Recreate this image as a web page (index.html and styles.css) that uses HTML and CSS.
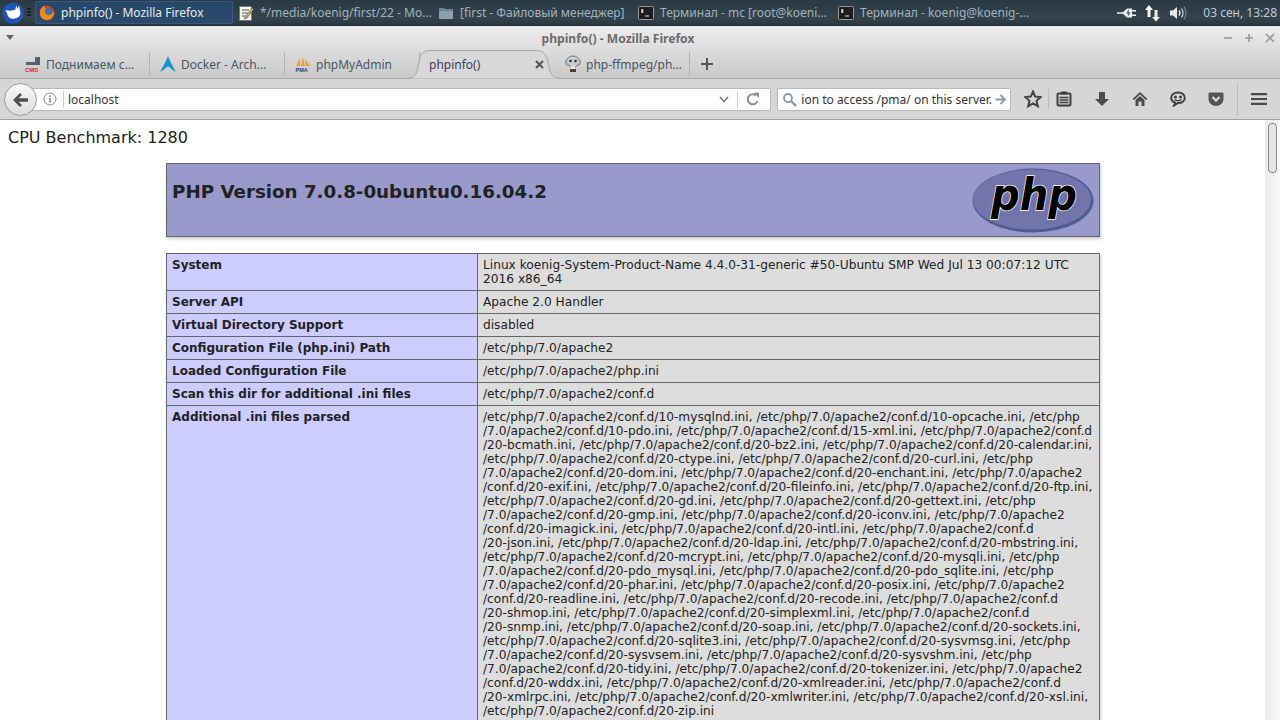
FILE: index.html
```html
<!DOCTYPE html>
<html lang="ru">
<head>
<meta charset="utf-8">
<title>phpinfo() - Mozilla Firefox</title>
<link rel="stylesheet" href="styles.css">
</head>
<body>
<header class="taskbar">
  <div class="whisker"><svg width="22" height="22" viewBox="0 0 22 22"><circle cx="11" cy="11" r="10.5" fill="#1c56b4"/><path d="M3.500 9 C5 7 7 9.500 9 8.500 L13 8 L14.500 3.500 L15.500 7 L17 3.500 L18 9 C19.500 12 17 16.500 12.500 16.500 C9 17.500 6.500 15.500 5.500 13 C5.500 11.500 4.500 10 3.500 9Z" fill="#fff"/></svg></div>
  <div class="handle"></div>
  <div class="task task-active">
    <svg width="16" height="16" viewBox="0 0 16 16"><circle cx="8" cy="8" r="7.500" fill="#c9421a"/><circle cx="9.500" cy="6.500" r="3.800" fill="#3f6fb0"/><path d="M1 8 C1 4 3 2 6 .8 C5.200 3 6 3.300 7 4 C5.500 5 5.500 7 6.500 8.500 C8.500 11.500 12.500 10.500 14.500 6.500 L15.300 8 C15 12 12 15 8 15 C4 15 1 12 1 8Z" fill="#ef8a1d"/></svg>
    <span class="task-label">phpinfo() - Mozilla Firefox</span>
  </div>
  <div class="task">
    <svg width="16" height="16" viewBox="0 0 16 16"><rect x="1.500" y="1.500" width="12" height="14" fill="#f4f4f0" stroke="#777"/><path d="M4 5H11M4 8H10M4 11H8" stroke="#555"/><path d="M7 12 L14 3 L16 4 L9 13 L6.500 14Z" fill="#c9b26c" stroke="#444" stroke-width=".6"/></svg>
    <span class="task-label">*/media/koenig/first/22 - Mo...</span>
  </div>
  <div class="task">
    <svg width="16" height="16" viewBox="0 0 16 16"><path d="M1 4 V3 H6 L7 4 H15 V14 H1Z" fill="#6c8494"/><rect x="1" y="6" width="14" height="8" fill="#8ba1af"/></svg>
    <span class="task-label">[first - Файловый менеджер]</span>
  </div>
  <div class="task">
    <svg width="16" height="16" viewBox="0 0 16 16"><rect x=".5" y="1.500" width="15" height="13" rx="1" fill="#1d1d1d" stroke="#9a9a9a"/><path d="M3 5H5.500M3 7H5.500M4.200 4V8M7 11H11" stroke="#eee"/></svg>
    <span class="task-label">Терминал - mc [root@koeni...</span>
  </div>
  <div class="task">
    <svg width="16" height="16" viewBox="0 0 16 16"><rect x=".5" y="1.500" width="15" height="13" rx="1" fill="#1d1d1d" stroke="#9a9a9a"/><path d="M3 5H5.500M3 7H5.500M4.200 4V8M7 11H11" stroke="#eee"/></svg>
    <span class="task-label">Терминал - koenig@koenig-...</span>
  </div>
  <div class="tray">
    <svg width="20" height="16" viewBox="0 0 20 16"><path d="M0 8H6" stroke="#eee" stroke-width="1.500"/><path d="M5 8 L10 3.500 H15 V5 H19 V6.500 H15 V9.500 H19 V11 H15 V12.500 H10Z" fill="#eee"/><path d="M12 4 L9.500 8.500 H11.500 L10.500 12 L13.500 7.500 H11.500Z" fill="#2e3f49"/></svg>
    <svg width="18" height="18" viewBox="0 0 18 18"><path d="M5 1 L9 6 H6.500 V13 H3.500 V6 H1Z" fill="#fff"/><path d="M10.500 6 H13.500 V13 H16 L12 17.500 L8 13 H10.500Z" fill="#eee"/></svg>
    <svg width="19" height="18" viewBox="0 0 19 18"><path d="M1 6.500 H4 L8 3 V15 L4 11.500 H1Z" fill="#e8e8e8"/><path d="M10 6.500 Q12 9 10 11.500" fill="none" stroke="#e8e8e8" stroke-width="1.300"/><path d="M12.500 4.500 Q15.500 9 12.500 13.500" fill="none" stroke="#cfd4d6" stroke-width="1.200"/><path d="M15 2.500 Q19 9 15 15.500" fill="none" stroke="#7d898f" stroke-width="1.100"/></svg>
  </div>
  <div class="clock">03 сен, 13:28</div>
</header>

<div class="window-top">
  <div class="titlebar">
    <svg class="menu-arrow" width="9" height="6" viewBox="0 0 9 6"><path d="M0 0H8L4 5Z" fill="#666"/></svg>
    <div class="window-title">phpinfo() - Mozilla Firefox</div>
    <div class="window-buttons">
      <svg width="10" height="10" viewBox="0 0 10 10"><path d="M1 5H9" stroke="#999" stroke-width="1.600"/></svg>
      <svg width="10" height="10" viewBox="0 0 10 10"><path d="M1 5H9M5 1V9" stroke="#999" stroke-width="1.600"/></svg>
      <svg width="10" height="10" viewBox="0 0 10 10"><path d="M1 1L9 9M9 1L1 9" stroke="#999" stroke-width="1.600"/></svg>
    </div>
  </div>
  <nav class="tabstrip">
    <div class="tab">
      <svg width="16" height="16" viewBox="0 0 16 16"><path d="M10 1H15V9H1V6H10Z" fill="#54616c"/><text x="0" y="15.500" class="cms-text">CMS</text></svg>
      <span class="tab-label">Поднимаем с...</span>
    </div>
    <div class="tab">
      <svg width="16" height="16" viewBox="0 0 16 16"><path d="M8 0 C9 3 12 9 16 16 C13 14 11 13 11 13 C10 10 6 10 5 13 C5 13 3 14 0 16 C4 9 7 3 8 0Z" fill="#1793d1"/></svg>
      <span class="tab-label">Docker - Arch...</span>
    </div>
    <div class="tab">
      <svg width="16" height="16" viewBox="0 0 16 16"><path d="M1 10 L5 2 L5 10Z M6 10 L8 1 L9.500 10Z M10.500 10 L10 3 L15 10Z" fill="#f29a2e"/><text x="0.500" y="15.500" class="pma-text">PMA</text></svg>
      <span class="tab-label">phpMyAdmin</span>
    </div>
    <div class="tab tab-active">
      <svg class="tab-shape" width="160" height="30" viewBox="0 0 160 30"><path d="M0 29.500 C8 29.500 10 27 12 18 C14 7 15 1.500 24 1.500 H131 C139 1.500 141 7 143 18 C145 27 147 29.500 159 29.500" fill="#d8d8d8" stroke="#a8a8a8"/></svg>
      <span class="tab-label tab-label-active">phpinfo()</span>
      <svg class="tab-close" width="9" height="9" viewBox="0 0 9 9"><path d="M1 1L8 8M8 1L1 8" stroke="#555" stroke-width="2"/></svg>
    </div>
    <div class="tab tab-after">
      <svg width="16" height="18" viewBox="0 0 16 18"><ellipse cx="8" cy="6.500" rx="6.500" ry="5.500" fill="#c9ced2" stroke="#777"/><path d="M1 5 C-1 8 1 11 4 10M15 5 C17 8 15 11 12 10" fill="#aeb4b8" stroke="#777" stroke-width=".7"/><circle cx="5.500" cy="6" r="1.300" fill="#333"/><circle cx="10.500" cy="6" r="1.300" fill="#333"/><path d="M6 11 V14 H10 V11Z" fill="#e6e6e6"/><path d="M5 14 H11 V17 H5Z" fill="#5a3a22"/></svg>
      <span class="tab-label">php-ffmpeg/ph...</span>
    </div>
    <div class="new-tab"><svg width="14" height="14" viewBox="0 0 14 14"><path d="M7 1V13M1 7H13" stroke="#555" stroke-width="2"/></svg></div>
  </nav>
  <div class="toolbar">
    <div class="back">
      <svg width="15" height="14" viewBox="0 0 15 14"><path d="M7 0 L0 7 L7 14 L9 12 L5.500 8.700 H15 V5.300 H5.500 L9 2Z" fill="#505050"/></svg>
    </div>
    <div class="urlbar">
      <svg class="info" width="14" height="14" viewBox="0 0 14 14"><circle cx="7" cy="7" r="6" fill="none" stroke="#888"/><path d="M7 3.500V5M7 6V10.500" stroke="#777" stroke-width="1.400"/></svg>
      <span class="divider"></span>
      <span class="url">localhost</span>
      <svg class="url-chevron" width="10" height="7" viewBox="0 0 10 7"><path d="M1 1 L5 5.500 L9 1" fill="none" stroke="#777" stroke-width="1.500"/></svg>
      <span class="divider"></span>
      <svg class="reload" width="14" height="14" viewBox="0 0 14 14"><path d="M11.500 9 A5 5 0 1 1 10 3.500" fill="none" stroke="#8a8f93" stroke-width="2"/><path d="M8 0.500 H13 V6Z" fill="#8a8f93"/></svg>
    </div>
    <div class="searchbar">
      <svg width="15" height="15" viewBox="0 0 15 15"><circle cx="6" cy="6" r="4" fill="none" stroke="#8c97a3" stroke-width="1.800"/><path d="M9 9 L14 14" stroke="#8c97a3" stroke-width="2.400"/></svg>
      <span class="search-text"><span>ession to access /pma/ on this server.</span></span>
      <svg width="11" height="11" viewBox="0 0 11 11"><path d="M5.500 1 L10 5.500 L5.500 10 M10 5.500 H0.500" fill="none" stroke="#8c97a3" stroke-width="1.800"/></svg>
    </div>
    <div class="tools">
      <svg class="t-star" width="18" height="18" viewBox="0 0 18 18"><path d="M9 1.500 L11.200 6.600 L16.700 7.100 L12.500 10.800 L13.800 16.200 L9 13.300 L4.200 16.200 L5.500 10.800 L1.300 7.100 L6.800 6.600Z" fill="none" stroke="#444" stroke-width="2"/></svg>
      <span class="t-sep"></span>
      <svg class="t-list" width="16" height="16" viewBox="0 0 16 16"><rect x="1.500" y="2.500" width="13" height="12" rx="1" fill="none" stroke="#3f3f3f" stroke-width="2"/><rect x="5" y="0.500" width="6" height="3" fill="#3f3f3f"/><path d="M3.500 6.500H12.500M3.500 9H12.500M3.500 11.500H12.500" stroke="#3f3f3f" stroke-width="1.400"/></svg>
      <svg class="t-down" width="16" height="16" viewBox="0 0 16 16"><path d="M5 1H11V8H15L8 15L1 8H5Z" fill="#4c4c4c"/></svg>
      <svg class="t-home" width="16" height="16" viewBox="0 0 16 16"><path d="M8 1 L15.500 8 L14 9 L8 3.500 L2 9 L0.500 8Z" fill="#4c4c4c"/><path d="M3.500 9 L8 5 L12.500 9 V15 H9.500 V10.500 H6.500 V15 H3.500Z" fill="#4c4c4c"/></svg>
      <svg class="t-chat" width="16" height="16" viewBox="0 0 16 16"><path d="M8 1.500 C12 1.500 14.800 3.800 14.800 7 C14.800 10 12 12 8 12 L4 14.500 L5 11.500 C2.700 10.700 1.200 9 1.200 7 C1.200 3.800 4 1.500 8 1.500Z" fill="none" stroke="#3f3f3f" stroke-width="2"/><circle cx="5.500" cy="6" r="1.500" fill="#3f3f3f"/><circle cx="10.500" cy="6" r="1.500" fill="#3f3f3f"/><path d="M4.500 8.500 Q8 11 11.500 8.500" fill="none" stroke="#3f3f3f" stroke-width="1.400"/></svg>
      <svg class="t-pocket" width="16" height="16" viewBox="0 0 16 16"><path d="M1.500 1.500 H14.500 Q15.500 1.500 15.500 2.500 V8 C15.500 12 12 15 8 15 C4 15 .5 12 .5 8 V2.500 Q.5 1.500 1.500 1.500Z" fill="#555"/><path d="M4.500 6 L8 9.500 L11.500 6" fill="none" stroke="#e2e2e2" stroke-width="2"/></svg>
      <span class="t-sep t-sep-wide"></span>
      <svg class="t-menu" width="16" height="14" viewBox="0 0 16 14"><path d="M0 2.200H16M0 7H16M0 11.800H16" stroke="#4a4a4a" stroke-width="2.200"/></svg>
    </div>
  </div>
</div>

<div class="viewport">
  <main class="page">
    <div class="benchmark">CPU Benchmark: 1280</div>
    <div class="center">
      <table class="info-table">
        <tr class="h"><td>
          <svg class="php-logo" width="122" height="65" viewBox="0 0 122 65"><ellipse cx="61" cy="32.500" rx="60.500" ry="32" fill="#4f5b93"/><ellipse cx="60" cy="31.500" rx="59" ry="30" fill="#7175ac"/><text x="19" y="42" textLength="86" lengthAdjust="spacingAndGlyphs" class="php-word">php</text></svg>
          <h1 class="p">PHP Version 7.0.8-0ubuntu0.16.04.2</h1>
        </td></tr>
      </table>
      <table class="info-table">
        <tr><td class="e">System</td><td class="v">Linux koenig-System-Product-Name 4.4.0-31-generic #50-Ubuntu SMP Wed Jul 13 00:07:12 UTC<br>2016 x86_64</td></tr>
        <tr><td class="e">Server API</td><td class="v">Apache 2.0 Handler</td></tr>
        <tr><td class="e">Virtual Directory Support</td><td class="v">disabled</td></tr>
        <tr><td class="e">Configuration File (php.ini) Path</td><td class="v">/etc/php/7.0/apache2</td></tr>
        <tr><td class="e">Loaded Configuration File</td><td class="v">/etc/php/7.0/apache2/php.ini</td></tr>
        <tr><td class="e">Scan this dir for additional .ini files</td><td class="v">/etc/php/7.0/apache2/conf.d</td></tr>
        <tr><td class="e">Additional .ini files parsed</td><td class="v">/etc/php/7.0/apache2/conf.d/10-mysqlnd.ini, /etc/php/7.0/apache2/conf.d/10-opcache.ini, /etc/php<br>/7.0/apache2/conf.d/10-pdo.ini, /etc/php/7.0/apache2/conf.d/15-xml.ini, /etc/php/7.0/apache2/conf.d<br>/20-bcmath.ini, /etc/php/7.0/apache2/conf.d/20-bz2.ini, /etc/php/7.0/apache2/conf.d/20-calendar.ini,<br>/etc/php/7.0/apache2/conf.d/20-ctype.ini, /etc/php/7.0/apache2/conf.d/20-curl.ini, /etc/php<br>/7.0/apache2/conf.d/20-dom.ini, /etc/php/7.0/apache2/conf.d/20-enchant.ini, /etc/php/7.0/apache2<br>/conf.d/20-exif.ini, /etc/php/7.0/apache2/conf.d/20-fileinfo.ini, /etc/php/7.0/apache2/conf.d/20-ftp.ini,<br>/etc/php/7.0/apache2/conf.d/20-gd.ini, /etc/php/7.0/apache2/conf.d/20-gettext.ini, /etc/php<br>/7.0/apache2/conf.d/20-gmp.ini, /etc/php/7.0/apache2/conf.d/20-iconv.ini, /etc/php/7.0/apache2<br>/conf.d/20-imagick.ini, /etc/php/7.0/apache2/conf.d/20-intl.ini, /etc/php/7.0/apache2/conf.d<br>/20-json.ini, /etc/php/7.0/apache2/conf.d/20-ldap.ini, /etc/php/7.0/apache2/conf.d/20-mbstring.ini,<br>/etc/php/7.0/apache2/conf.d/20-mcrypt.ini, /etc/php/7.0/apache2/conf.d/20-mysqli.ini, /etc/php<br>/7.0/apache2/conf.d/20-pdo_mysql.ini, /etc/php/7.0/apache2/conf.d/20-pdo_sqlite.ini, /etc/php<br>/7.0/apache2/conf.d/20-phar.ini, /etc/php/7.0/apache2/conf.d/20-posix.ini, /etc/php/7.0/apache2<br>/conf.d/20-readline.ini, /etc/php/7.0/apache2/conf.d/20-recode.ini, /etc/php/7.0/apache2/conf.d<br>/20-shmop.ini, /etc/php/7.0/apache2/conf.d/20-simplexml.ini, /etc/php/7.0/apache2/conf.d<br>/20-snmp.ini, /etc/php/7.0/apache2/conf.d/20-soap.ini, /etc/php/7.0/apache2/conf.d/20-sockets.ini,<br>/etc/php/7.0/apache2/conf.d/20-sqlite3.ini, /etc/php/7.0/apache2/conf.d/20-sysvmsg.ini, /etc/php<br>/7.0/apache2/conf.d/20-sysvsem.ini, /etc/php/7.0/apache2/conf.d/20-sysvshm.ini, /etc/php<br>/7.0/apache2/conf.d/20-tidy.ini, /etc/php/7.0/apache2/conf.d/20-tokenizer.ini, /etc/php/7.0/apache2<br>/conf.d/20-wddx.ini, /etc/php/7.0/apache2/conf.d/20-xmlreader.ini, /etc/php/7.0/apache2/conf.d<br>/20-xmlrpc.ini, /etc/php/7.0/apache2/conf.d/20-xmlwriter.ini, /etc/php/7.0/apache2/conf.d/20-xsl.ini,<br>/etc/php/7.0/apache2/conf.d/20-zip.ini</td></tr>
      </table>
    </div>
  </main>
  <div class="scrollbar"><div class="thumb"></div></div>
</div>
</body>
</html>
```
FILE: styles.css
```css
* { box-sizing: border-box; }
html, body { margin: 0; height: 720px; overflow: hidden; background: #fff; }
body { display: flex; flex-direction: column; font-family: "Noto Sans", sans-serif; }

.taskbar { height: 26px; flex: none; display: flex; align-items: center; background: linear-gradient(#2a3a44, #33444e 70%, #2a3840); border-bottom: 1px solid #1f2a31; font-size: 12px; color: #a3b2ba; }
.whisker { width: 27px; height: 24px; display: flex; align-items: center; padding-left: 2px; }
.handle { width: 4px; height: 9px; margin-right: 4px; background: repeating-linear-gradient(#1a2329 0 2px, #3c4a53 2px 3px); }
.task { width: 200px; height: 23px; flex: none; display: flex; align-items: center; gap: 6px; padding-left: 3px; white-space: nowrap; }
.task-active { width: 198px; margin-right: 2px; padding-left: 3px; background: linear-gradient(#27476a, #2a4a6c); border: 1px solid #365a80; border-radius: 2px; color: #e4ecf0; gap: 6px; }
.tray { margin-left: auto; display: flex; align-items: center; gap: 7px; }
.clock { margin: 0 3px 0 15px; white-space: nowrap; color: #c0ccd2; }

.window-top { flex: none; background: linear-gradient(#ededed, #c9c9c9 52px, #d6d6d6 53px, #d6d6d6); border-bottom: 1px solid #9f9f9f; color: #444; }
.titlebar { position: relative; height: 24px; display: flex; align-items: center; justify-content: center; padding-right: 44px; }
.menu-arrow { position: absolute; left: 6px; top: 9px; }
.window-title { font-size: 12.100px; font-weight: 700; color: #6b6b6b; }
.window-buttons { position: absolute; right: 5px; top: 7px; display: flex; gap: 11px; }

.tabstrip { height: 29px; display: flex; align-items: center; padding-left: 15px; border-bottom: 1px solid #a8a8a8; }
.tab { position: relative; width: 135px; height: 24px; flex: none; display: flex; align-items: center; gap: 5px; padding-left: 10px; border-right: 1px solid #b4b4b4; font-size: 12px; color: #4c5560; }
.tab-active { border-right: 0; gap: 0; padding-left: 9px; }
.tab-after { border-right: 1px solid #b4b4b4; }
.tab-shape { position: absolute; left: -14px; top: -3px; }
.tab-label { position: relative; white-space: nowrap; }
.tab-label-active { color: #3e3e5a; }
.tab-close { position: absolute; right: 11px; top: 8px; }
.cms-text { font: 700 6px "Liberation Sans", sans-serif; fill: #d8232a; }
.pma-text { font: 700 5.500px "Liberation Sans", sans-serif; fill: #2d3f75; }
.new-tab { width: 34px; display: flex; justify-content: center; }

.toolbar { height: 40px; display: flex; align-items: center; position: relative; padding-left: 30px; }
.back { position: absolute; left: 4px; top: 4px; width: 33px; height: 33px; border-radius: 50%; border: 1px solid #9a9a9a; background: linear-gradient(#fafafa, #dcdcdc); display: flex; align-items: center; justify-content: center; z-index: 1; }
.urlbar { width: 741px; height: 23px; display: flex; align-items: center; background: #fff; border: 1px solid #b9b9b9; border-radius: 2px; padding-left: 12px; font-size: 12px; color: #333; }
.info { flex: none; }
.divider { width: 1px; height: 17px; background: #cfcfcf; margin-left: 6px; flex: none; }
.url { margin-left: 4px; flex: 1; }
.url-chevron { margin-right: 2px; }
.reload { margin: 0 10px 0 8px; }
.searchbar { width: 234px; height: 23px; margin-left: 6px; display: flex; align-items: center; background: #fff; border: 1px solid #b9b9b9; border-radius: 2px; padding: 0 4px 0 4px; font-size: 12px; color: #333; }
.search-text { flex: 1; overflow: hidden; white-space: nowrap; direction: rtl; margin: 0 3px 0 4px; }
.search-text span { direction: ltr; unicode-bidi: embed; }
.tools { display: flex; align-items: center; margin-left: 13px; }
.t-sep { width: 1px; height: 20px; background: #bdbdbd; margin-left: 6px; }
.t-sep-wide { height: 34px; margin-left: 13px; }
.t-list { margin-left: 7px; }
.t-down, .t-home, .t-chat, .t-pocket { margin-left: 22px; }
.t-menu { margin-left: 13px; }

.viewport { flex: 1; min-height: 0; display: flex; overflow: hidden; }
.page { flex: 1; min-width: 0; overflow: hidden; font-family: "DejaVu Sans", sans-serif; color: #222; padding-top: 8px; }
.benchmark { padding-left: 8px; font-size: 16px; }
.center { text-align: center; padding-left: 1px; }
.info-table { border-collapse: collapse; table-layout: fixed; width: 934px; margin: 1em auto; text-align: left; box-shadow: 1px 2px 3px #ccc; }
.info-table td { border: 1px solid #666; font-size: 12px; line-height: 14px; vertical-align: baseline; padding: 4px 5px; }
.info-table .h td { background: #99c; font-weight: 700; }
.e { background: #ccf; width: 311px; font-weight: 700; }
.info-table .v { background: #ddd; white-space: nowrap; font-size: 12.200px; }
.p { margin: 13px 0 12px; font-size: 18.250px; line-height: 21px; text-align: left; }
.php-logo { float: right; margin-bottom: -1px; }
.php-word { font: italic 700 45px "DejaVu Sans", sans-serif; fill: #000; stroke: #fff; stroke-width: 1.500px; paint-order: stroke; }

.scrollbar { width: 15px; flex: none; padding: 3px 3px 0; background: linear-gradient(90deg, #ebebeb, #fafafa); }
.thumb { width: 9px; height: 50px; background: #e6e6e6; border: 1px solid #8a8a8a; border-radius: 4px; }
```
